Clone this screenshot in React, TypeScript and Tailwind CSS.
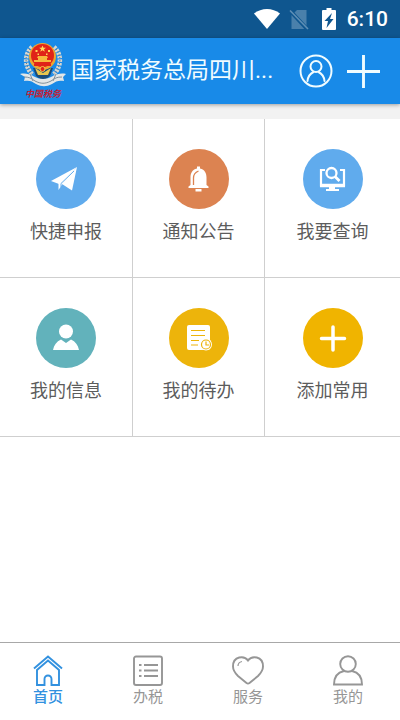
import type { ReactNode } from 'react';

/* ─── Status bar ─── */
function StatusBar() {
  return (
    <div className="flex h-[38px] items-center justify-end bg-[#0f568f] pr-3 text-white">
      <svg className="mr-[9px] h-5 w-[26px]" viewBox="0 0 26 20" fill="currentColor" aria-hidden="true">
        <path d="M0 4.500C7.500-1.500 18.500-1.500 26 4.500L13 20Z" />
      </svg>
      <svg className="mr-[13px] h-[22px] w-5" viewBox="0 0 20 22" aria-hidden="true">
        <path d="M8 2h9.500v19H2.500V7.500Z" fill="#4a80ab" />
        <path d="M0 1.500 19 22" stroke="#0f568f" strokeWidth="4" />
        <path d="M1 2.500 19 21" stroke="#5f8fb5" strokeWidth="1.600" />
      </svg>
      <svg className="mr-[11px] h-[22px] w-[14px]" viewBox="0 0 14 22" aria-hidden="true">
        <path d="M4.500 0h5v2H13a1 1 0 0 1 1 1v18a1 1 0 0 1-1 1H1a1 1 0 0 1-1-1V3a1 1 0 0 1 1-1h3.500Z" fill="#fff" />
        <path d="M10 5 2.500 13H6l-1.500 7L11.500 11H8Z" fill="#0f568f" />
      </svg>
      <span className="text-[21px] leading-6 font-medium">6:10</span>
    </div>
  );
}

/* ─── Emblem ─── */
function Emblem() {
  return (
    <svg className="h-[58px] w-[46px] shrink-0" viewBox="0 0 46 58" role="img" aria-label="中国税务">
      {/* wheat ears */}
      <path d="M12 5C4 12 4 25 13 33M34 5C42 12 42 25 33 33" fill="none" stroke="#d6d6d0" strokeWidth="4.500" strokeDasharray="2.500 1" />
      <path d="M10 7C4 14 5 24 12 32M36 7C42 14 41 24 34 32" fill="none" stroke="#6b7680" strokeWidth="1" strokeDasharray="1 2" />
      {/* gear and shield */}
      <path d="M13 26h20l-3 8-7 5-7-5Z" fill="#1b4c79" />
      <path d="M15 26l8 5 8-5-3 7h-10Z" fill="#e8c64f" />
      <circle cx="22.500" cy="14.500" r="13.500" fill="#eda52f" />
      <circle cx="22.500" cy="13.500" r="11.500" fill="#e02318" />
      <path d="m22.500 3.500 1 2.300h2.500l-2 1.500.8 2.400-2.300-1.500-2.200 1.500.8-2.400-2-1.500h2.400Z" fill="#ffd85b" />
      <path d="M15.500 8h2v2h-2zM28 8h2v2h-2zM17.500 11.500h1.500V13h-1.500zM26 11.500h1.500V13H26z" fill="#ffd85b" />
      <path d="M18 14h9l1 2h-1v2h4v2H14v-2h4v-2h-1Z" fill="#f7b83c" />
      <path d="M14 23h17" stroke="#e02318" strokeWidth="2" />
      <circle cx="22.500" cy="27" r="2.500" fill="#e02318" stroke="#f7c94a" />
      {/* ribbon */}
      <path d="M0 32c5-1 9 0 13 2 7 4 13 4 20 0 4-2 8-3 13-2l-3 3 1 4c-5-1-8 0-12 3-6 3-10 3-16 0-4-3-7-4-12-3l1-4Z" fill="#e3e7e8" />
      <path d="M4 35c5 0 7 1 11 4 6 3 10 3 16 0 4-3 6-4 11-4M10 32l3 7M36 32l-3 7" fill="none" stroke="#81909b" strokeWidth="1" />
      <text x="23" y="55" textAnchor="middle" fill="#c32035" fontSize="9" fontWeight="700" fontStyle="italic" fontFamily="'Noto Sans CJK SC', sans-serif">
        中国税务
      </text>
    </svg>
  );
}

/* ─── Header ─── */
function Header() {
  return (
    <header className="relative flex h-[66px] items-center bg-[#188ae8] px-5 text-[#f0fcff] shadow-[0_1px_4px_rgba(0,0,0,0.35)]">
      <Emblem />
      <h1 className="ml-[5px] min-w-0 flex-1 text-[23px] leading-8 whitespace-nowrap">国家税务总局四川...</h1>
      <button type="button" aria-label="账户" className="mr-[14px] shrink-0">
        <svg className="h-[34px] w-[34px]" viewBox="0 0 34 34" fill="none" stroke="currentColor" strokeWidth="2">
          <circle cx="17" cy="17" r="15.500" />
          <circle cx="17" cy="12.500" r="5.500" />
          <path d="M8.500 27c.5-5 3-7.500 6-9M25.500 27c-.5-5-3-7.500-6-9" strokeLinecap="round" />
        </svg>
      </button>
      <button type="button" aria-label="添加" className="shrink-0">
        <svg className="h-[33px] w-[33px]" viewBox="0 0 32 32" fill="none" stroke="currentColor" strokeWidth="2.800">
          <path d="M16 0v32M0 16h32" />
        </svg>
      </button>
    </header>
  );
}

/* ─── Shortcuts ─── */
type Shortcut = {
  label: string;
  color: string;
  icon: ReactNode;
};

// every icon is drawn on a 60x60 canvas, centred on 30,30
const shortcuts: Shortcut[] = [
  {
    label: '快捷申报',
    color: 'bg-[#60abed]',
    icon: (
      <>
        <path d="M41 18 15 32l8 3Z" fill="#fff" />
        <path d="M41 18 26 35l10 6.500Z" fill="#fff" />
        <path d="M41 18 22.500 33.500V41l4-6Z" fill="#fff" />
        <path d="M38 22 25 34.500V38" fill="none" stroke="#60abed" strokeWidth="1" />
      </>
    ),
  },
  {
    label: '通知公告',
    color: 'bg-[#dc8351]',
    icon: (
      <>
        <path d="M28 17.500h3v2c5 1 6.500 5 6.500 9V36l2 1.500V39h-20v-1.500l2-1.500v-7.500c0-4 1.500-8 6.500-9Z" fill="#fff" />
        <path d="M26.500 40h6v2.500h-6z" fill="#fff" />
        <path d="M24.500 36v-7c0-3 1.500-5.500 5-7" fill="none" stroke="#dc8351" strokeWidth="1.300" />
      </>
    ),
  },
  {
    label: '我要查询',
    color: 'bg-[#60abed]',
    icon: (
      <g fill="none" stroke="#fff">
        <path d="M22 21h-4v15.500h23V21h-4" strokeWidth="2.200" />
        <path d="M17 36.500h25" strokeWidth="3.500" />
        <path d="M26 37h6v3h4v2H23v-2h3Z" fill="#fff" stroke="none" />
        <circle cx="28.500" cy="24" r="5" strokeWidth="2.300" />
        <path d="m32 27.500 4.500 4.500" strokeWidth="2.800" />
      </g>
    ),
  },
  {
    label: '我的信息',
    color: 'bg-[#62b2bb]',
    icon: (
      <>
        <circle cx="30" cy="23.500" r="7" fill="#fff" />
        <path d="M17 42c1-5 3.500-8.500 8-10.500l5 3.500 5-3.500c4.500 2 7 5.500 8 10.500Z" fill="#fff" />
      </>
    ),
  },
  {
    label: '我的待办',
    color: 'bg-[#edb40b]',
    icon: (
      <>
        <rect x="18" y="17" width="23" height="25" rx="2" fill="#fff" />
        <path d="M22 22.500h14M22 27.500h14M22 32.500h8M22 37h7" stroke="#edb40b" strokeWidth="1.200" />
        <circle cx="37" cy="36.500" r="6" fill="#fff" />
        <circle cx="37" cy="36.500" r="4.500" fill="#fff" stroke="#edb40b" strokeWidth="1.200" />
        <path d="M37 33.500V37h3" fill="none" stroke="#edb40b" strokeWidth="1.200" />
      </>
    ),
  },
  {
    label: '添加常用',
    color: 'bg-[#f0b400]',
    icon: <path d="M30 19v23M18.500 30.500h23" stroke="#fff" strokeWidth="3.500" strokeLinecap="round" />,
  },
];

function ShortcutGrid() {
  return (
    <div className="grid grid-cols-[133fr_132fr_135fr] bg-white">
      {shortcuts.map((item) => (
        <button
          key={item.label}
          type="button"
          className="flex h-[159px] flex-col items-center border-r border-b border-[#cfcfcf] pt-[30px] nth-[3n]:border-r-0"
        >
          <span className={`h-[60px] w-[60px] rounded-full ${item.color}`}>
            <svg className="h-full w-full" viewBox="0 0 60 60" aria-hidden="true">
              {item.icon}
            </svg>
          </span>
          <span className="mt-[11px] text-lg leading-6 text-[#5c5c5c]">{item.label}</span>
        </button>
      ))}
    </div>
  );
}

/* ─── Bottom tabs ─── */
type Tab = {
  label: string;
  active?: boolean;
  icon: ReactNode;
};

const tabs: Tab[] = [
  {
    label: '首页',
    active: true,
    icon: (
      <>
        <path d="m2 13.500 14-12 14 12" />
        <path d="M5 15v15h7.500v-6a3.500 3.500 0 0 1 7 0v6H27V15L16 5.500Z" />
      </>
    ),
  },
  {
    label: '办税',
    icon: (
      <>
        <rect x="2" y="1.500" width="28" height="28.500" rx="2" />
        <path d="M12 10h14M12 15.500h14M12 21h14M7 10h2.500M7 15.500h2.500M7 21h2.500" />
      </>
    ),
  },
  {
    label: '服务',
    icon: (
      <>
        <path d="M16 5.500C12.500.5 1 .5 1 11.500c0 4 2 6.500 5 9.500l8.500 7q1.500 1 3 0L26 21c3-3 5-5.500 5-9.500 0-11-11.500-11-15-6Z" />
        <path d="M6 11c0-2.500 1.500-4 4-4.500" strokeWidth="1.200" />
      </>
    ),
  },
  {
    label: '我的',
    icon: (
      <>
        <circle cx="16" cy="9" r="7.800" />
        <path d="M12 16C5 17.500 2 23 2 29.500h28c0-6.500-3-12-10-13.500" />
      </>
    ),
  },
];

function TabBar() {
  return (
    <nav className="grid grid-cols-4 border-t border-[#a8a8a8] bg-white pt-3 pb-[13px]">
      {tabs.map((tab) => (
        <button
          key={tab.label}
          type="button"
          aria-current={tab.active ? 'page' : undefined}
          className={`flex flex-col items-center pr-1 ${tab.active ? 'font-medium text-[#3291df]' : 'text-[#969696]'}`}
        >
          <svg className="h-8 w-8" viewBox="0 0 32 32" fill="none" stroke="currentColor" strokeWidth="1.900" aria-hidden="true">
            {tab.icon}
          </svg>
          <span className="text-[15px] leading-5">{tab.label}</span>
        </button>
      ))}
    </nav>
  );
}

export default function App() {
  return (
    <div className="flex min-h-screen flex-col bg-white font-[Roboto,'Noto_Sans_CJK_SC',sans-serif]">
      <StatusBar />
      <Header />
      <main className="flex-1">
        <div className="h-[15px] bg-[#f2f2f2]" />
        <ShortcutGrid />
      </main>
      <TabBar />
    </div>
  );
}
